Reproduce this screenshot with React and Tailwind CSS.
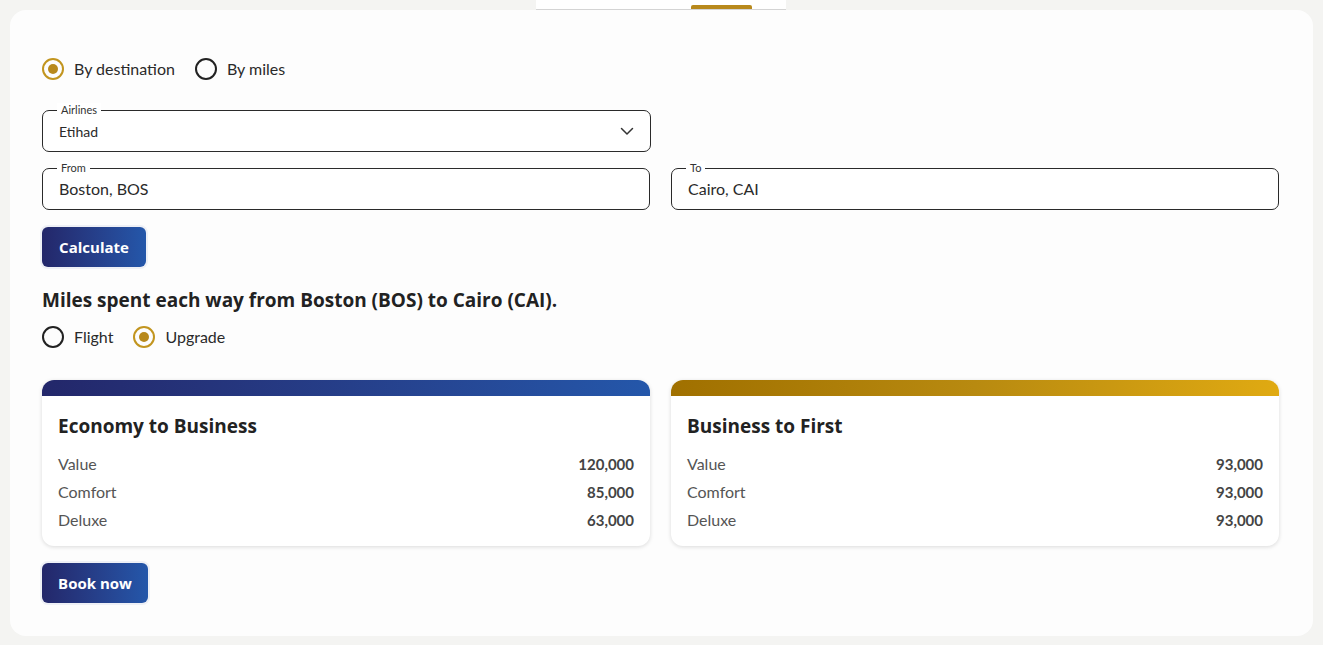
import React from "react";

const font = { fontFamily: "Lato, 'Noto Sans', 'Liberation Sans', sans-serif" };
const boldFont = "font-['Open_Sans',Lato,sans-serif]";

function Radio({ checked, label }) {
  return (
    <label className="flex items-center gap-[10px] cursor-pointer">
      <span
        className={
          "w-[22px] h-[22px] rounded-full border-2 flex items-center justify-center " +
          (checked ? "border-[#c2951f]" : "border-[#222]")
        }
      >
        {checked && <span className="w-[10px] h-[10px] rounded-full bg-[#b8891c]" />}
      </span>
      <span className="text-[16px] text-[#2a2a2a]">{label}</span>
    </label>
  );
}

function Field({ label, value, small, chevron }) {
  return (
    <div className="relative h-[42px] border border-[#2a2a2a] rounded-[7px] flex items-center px-4 bg-white">
      <span className="absolute -top-[8px] left-[14px] px-[4px] bg-white text-[11px] leading-[14px] text-[#333]">
        {label}
      </span>
      <span className={(small ? "text-[14px]" : "text-[16px]") + " text-[#2a2a2a] flex-1"}>{value}</span>
      {chevron && (
        <svg width="16" height="16" viewBox="0 0 16 16" className="mr-[-1px]">
          <path d="M2.5 5.5 L8 11 L13.5 5.5" fill="none" stroke="#333" strokeWidth="1.5" strokeLinecap="round" strokeLinejoin="round" />
        </svg>
      )}
    </div>
  );
}

function Button({ children, w }) {
  return (
    <button
      className={
        "h-[40px] rounded-[6px] text-white font-bold text-[15px] bg-gradient-to-r from-[#23276a] to-[#2457aa] shadow-[0_0_0_2px_#eef0f6] " +
        boldFont +
        " " +
        w
      }
    >
      {children}
    </button>
  );
}

function Card({ title, rows, gold }) {
  return (
    <div className="rounded-[12px] bg-white shadow-[0_1px_4px_rgba(0,0,0,0.14)] overflow-hidden">
      <div
        className={
          "h-[16px] " +
          (gold
            ? "bg-gradient-to-r from-[#a07000] via-[#b88a10] to-[#e0aa12]"
            : "bg-gradient-to-r from-[#23276a] to-[#2457aa]")
        }
      />
      <div className="px-4 pt-[18px] pb-[12px]">
        <div className={"text-[19px] leading-[24px] font-bold text-[#222] " + boldFont}>{title}</div>
        <div className="mt-[12px]">
          {rows.map(([k, v]) => (
            <div key={k} className="flex justify-between h-[28px] items-center text-[16px]">
              <span className="text-[#555]">{k}</span>
              <span className="font-bold text-[15px] text-[#444]">{v}</span>
            </div>
          ))}
        </div>
      </div>
    </div>
  );
}

export default function App() {
  return (
    <div className="min-h-screen bg-[#f4f4f2] flex flex-col px-[10px] pb-[9px]" style={font}>
      <div className="mx-auto w-[250px] h-[10px] bg-white border-b border-[#d4d4d4] flex items-end pl-[155px] translate-x-[-1px]">
        <div className="w-[61px] h-[4px] bg-[#b8891c] rounded-t-[2px]" />
      </div>
      <div className="bg-[#fdfdfd] rounded-[16px] pl-[32px] pr-[34px] pt-[47px] pb-[33px]">
        <div className="flex gap-[20px]">
          <Radio checked label="By destination" />
          <Radio label="By miles" />
        </div>

        <div className="mt-[29px] w-[609px]">
          <Field label="Airlines" value="Etihad" small chevron />
        </div>
        <div className="mt-[16px] grid grid-cols-2 gap-[21px]">
          <Field label="From" value="Boston, BOS" />
          <Field label="To" value="Cairo, CAI" />
        </div>
        <div className="mt-[17px]">
          <Button w="w-[104px]">Calculate</Button>
        </div>

        <h2 className={"mt-[21px] text-[19px] leading-[24px] font-bold text-[#222] " + boldFont}>
          Miles spent each way from Boston (BOS) to Cairo (CAI).
        </h2>
        <div className="mt-[13px] flex gap-[20px]">
          <Radio label="Flight" />
          <Radio checked label="Upgrade" />
        </div>

        <div className="mt-[31px] grid grid-cols-2 gap-[21px]">
          <Card
            title="Economy to Business"
            rows={[
              ["Value", "120,000"],
              ["Comfort", "85,000"],
              ["Deluxe", "63,000"],
            ]}
          />
          <Card
            gold
            title="Business to First"
            rows={[
              ["Value", "93,000"],
              ["Comfort", "93,000"],
              ["Deluxe", "93,000"],
            ]}
          />
        </div>
        <div className="mt-[17px]">
          <Button w="w-[106px]">Book now</Button>
        </div>
      </div>
    </div>
  );
}
